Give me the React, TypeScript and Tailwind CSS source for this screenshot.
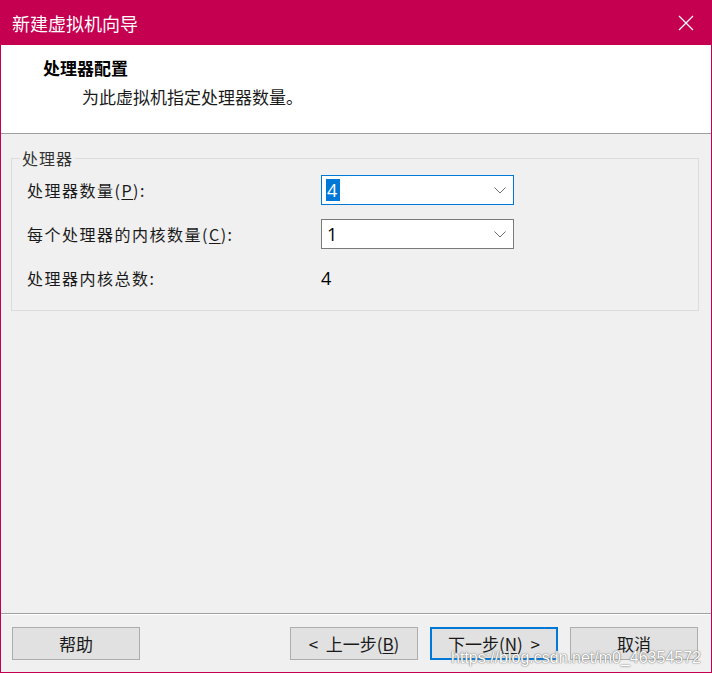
import React from 'react';

const cjk = { fontFamily: '"Noto Sans CJK SC", "Noto Sans", sans-serif' };

function Combo({ value, focused }: { value: string; focused?: boolean }) {
  return (
    <div
      className={`flex h-[30px] w-[193px] items-center justify-between bg-white pl-[4px] pr-[7px] ${
        focused ? 'border border-[#0078d7]' : 'border border-[#7a7a7a]'
      }`}
    >
      <span
        className={`flex h-[22px] items-center px-[1px] text-[18px] leading-none ${
          focused ? 'bg-[#0078d7] text-white' : 'text-black'
        }`}
        style={{ fontFamily: '"Open Sans", "Noto Sans", sans-serif' }}
      >
        {value}
      </span>
      <svg width="12" height="7" viewBox="0 0 12 7" className="text-[#6a6a6a]">
        <path d="M0.5 0.5 L6 6 L11.5 0.5" fill="none" stroke="currentColor" strokeWidth="1" />
      </svg>
    </div>
  );
}

function Btn({ children, primary }: { children: React.ReactNode; primary?: boolean }) {
  return (
    <button
      className={`flex h-[33px] w-[128px] items-center justify-center bg-[#e1e1e1] text-[17px] text-[#1a1a1a] ${
        primary ? 'border-2 border-[#0078d7]' : 'border border-[#adadad]'
      }`}
      style={cjk}
    >
      {children}
    </button>
  );
}

export default function App() {
  return (
    <div className="relative flex h-[673px] w-[712px] flex-col overflow-hidden bg-[#f0f0f0] select-none" style={cjk}>
      {/* title bar */}
      <div className="flex h-[45px] shrink-0 items-center justify-between bg-[#c50050] pl-[12px] pr-[18px]">
        <span className="text-[18px] leading-none text-white">新建虚拟机向导</span>
        <svg width="16" height="16" viewBox="0 0 16 16">
          <path d="M1 1 L15 15 M15 1 L1 15" stroke="white" strokeWidth="1.2" />
        </svg>
      </div>

      <div className="flex flex-1 flex-col border-x border-b border-[#c50050]">
        {/* header */}
        <div className="h-[89px] shrink-0 border-b border-[#a0a0a0] bg-white pt-[13px]">
          <div className="pl-[42px] text-[17px] font-bold leading-[20px] text-black">处理器配置</div>
          <div className="mt-[9px] pl-[81px] text-[17px] leading-[20px] text-[#1a1a1a]">为此虚拟机指定处理器数量。</div>
        </div>

        {/* body */}
        <div className="flex-1 pt-[24px]">
          <div className="relative ml-[10px] mr-[12px] border border-[#dcdcdc] pb-[17px] pl-[15px] pt-[16px]">
            <span className="absolute left-[8px] top-[-12px] bg-[#f0f0f0] px-[2px] text-[16px] leading-[22px] tracking-[1px] text-[#333]">
              处理器
            </span>
            <div className="grid grid-cols-[294px_193px] gap-y-[14px] text-[16px] tracking-[1.5px] text-[#1a1a1a]">
              <div className="flex h-[30px] items-center">
                处理器数量(<span className="underline underline-offset-2">P</span>):
              </div>
              <Combo value="4" focused />
              <div className="flex h-[30px] items-center">
                每个处理器的内核数量(<span className="underline underline-offset-2">C</span>):
              </div>
              <Combo value="1" />
              <div className="flex h-[30px] items-center">处理器内核总数:</div>
              <div
                className="flex h-[30px] items-center text-[18px] text-black"
                style={{ fontFamily: '"Open Sans", "Noto Sans", sans-serif' }}
              >
                4
              </div>
            </div>
          </div>
        </div>

        {/* footer */}
        <div className="flex shrink-0 items-center justify-between border-t border-[#a0a0a0] pb-[12px] pl-[11px] pr-[13px] pt-[13px] shadow-[inset_0_1px_0_#ffffff]">
          <Btn>帮助</Btn>
          <div className="flex gap-[12px]">
            <Btn>
              &lt;&nbsp;&nbsp;上一步(<span className="underline underline-offset-2">B</span>)
            </Btn>
            <Btn primary>
              下一步(<span className="underline underline-offset-2">N</span>)&nbsp;&nbsp;&gt;
            </Btn>
            <Btn>取消</Btn>
          </div>
        </div>
      </div>

      {/* watermark */}
      <div
        className="pointer-events-none absolute bottom-[7px] right-[11px] text-[16px] leading-none text-white [text-shadow:0_0_1px_#555,0_0_2px_#999]"
        style={{ fontFamily: '"Liberation Sans", Arial, sans-serif' }}
      >
        https://blog.csdn.net/m0_46354572
      </div>
    </div>
  );
}
